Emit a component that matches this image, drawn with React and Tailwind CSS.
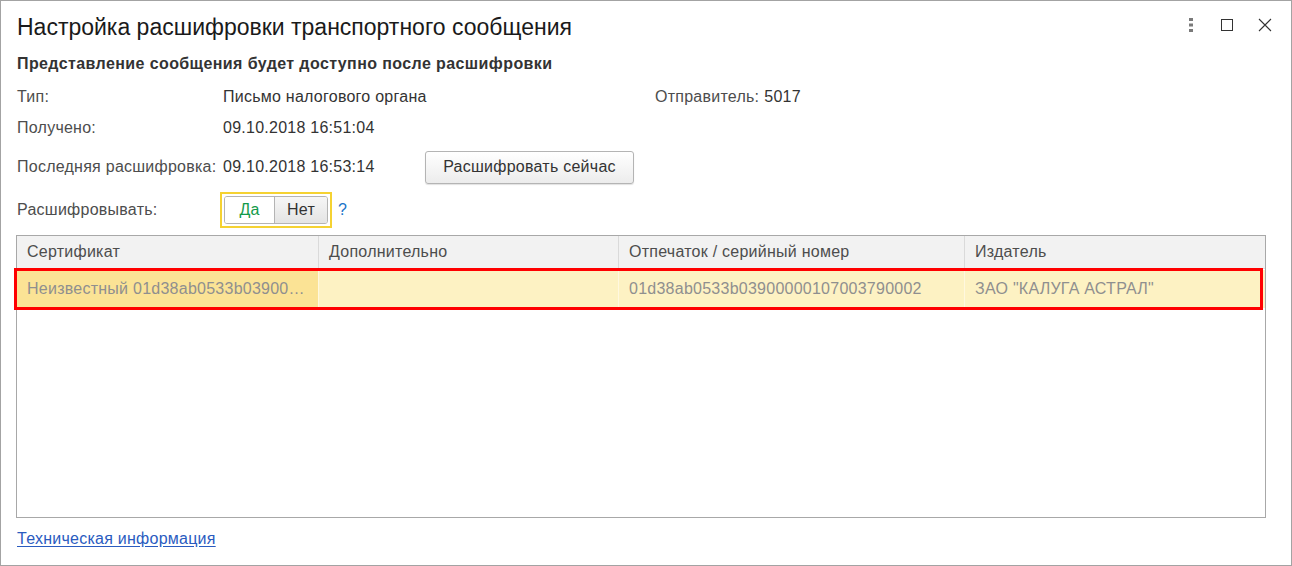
import React from 'react';

const font = { fontFamily: '"Liberation Sans", Arial, sans-serif' };

function TitleIcons() {
  return (
    <div className="flex items-center pr-[19px] pt-[3px]">
      <svg width="6" height="16" viewBox="0 0 6 16">
        <rect x="1" y="1" width="4" height="3" fill="#7a7a7a" />
        <rect x="1" y="6.5" width="4" height="3" fill="#7a7a7a" />
        <rect x="1" y="12" width="4" height="3" fill="#7a7a7a" />
      </svg>
      <svg width="14" height="14" viewBox="0 0 14 14" className="ml-[26px]">
        <rect x="1.5" y="1.5" width="11" height="11" fill="none" stroke="#333" strokeWidth="1" />
      </svg>
      <svg width="14" height="14" viewBox="0 0 14 14" className="ml-[24px]">
        <path d="M1 1 L13 13 M13 1 L1 13" stroke="#333" strokeWidth="1.1" />
      </svg>
    </div>
  );
}

export default function App() {
  const cols = [
    { title: 'Сертификат', w: 'w-[301px]' },
    { title: 'Дополнительно', w: 'w-[300px]' },
    { title: 'Отпечаток / серийный номер', w: 'w-[346px]' },
    { title: 'Издатель', w: 'flex-1' },
  ];

  return (
    <div style={font} className="w-[1292px] h-[566px] bg-white border border-[#a3a3a3] relative overflow-hidden">
      {/* Title */}
      <div className="flex items-start justify-between pt-[13px]">
        <h1 className="pl-[16px] text-[23px] leading-[26px] text-[#1a1a1a]">
          Настройка расшифровки транспортного сообщения
        </h1>
        <TitleIcons />
      </div>

      <div className="pl-[16px] pr-[26px] text-[16px] tracking-[0.25px]">
        <div className="mt-[12px] h-[24px] leading-[24px] font-bold tracking-[0.4px] text-[#333]">
          Представление сообщения будет доступно после расшифровки
        </div>

        <div className="mt-[9px] h-[24px] flex items-center">
          <span className="w-[206px] text-[#4d4d4d]">Тип:</span>
          <span className="w-[432px] text-[#333]">Письмо налогового органа</span>
          <span className="text-[#4d4d4d]">Отправитель:</span>
          <span className="ml-[5px] text-[#333]">5017</span>
        </div>

        <div className="mt-[7px] h-[24px] flex items-center">
          <span className="w-[206px] text-[#4d4d4d]">Получено:</span>
          <span className="text-[#333]">09.10.2018 16:51:04</span>
        </div>

        <div className="mt-[11px] h-[32px] flex items-center">
          <span className="w-[206px] text-[#4d4d4d] whitespace-nowrap">Последняя расшифровка:</span>
          <span className="w-[202px] text-[#333]">09.10.2018 16:53:14</span>
          <button className="h-[33px] w-[209px] rounded-[3px] border border-[#b4b4b4] bg-gradient-to-b from-white to-[#ececec] tracking-[0.25px] text-[#333] shadow-[0_1px_1px_rgba(0,0,0,0.12)]">
            Расшифровать сейчас
          </button>
        </div>

        <div className="mt-[9px] h-[36px] flex items-center">
          <span className="w-[203px] text-[#4d4d4d]">Расшифровывать:</span>
          <div className="h-[36px] w-[112px] border-2 border-[#f5d232] p-[2px]">
            <div className="flex h-full rounded-[3px] border border-[#b4b4b4] overflow-hidden">
              <div className="w-[49px] flex items-center justify-center bg-white text-[#129a4a]">Да</div>
              <div className="flex-1 flex items-center justify-center border-l border-[#b4b4b4] bg-gradient-to-b from-[#f6f6f6] to-[#e4e4e4] text-[#333]">Нет</div>
            </div>
          </div>
          <span className="ml-[6px] text-[#1a73c8]">?</span>
        </div>

        {/* Table */}
        <div className="mt-[7px] -ml-[1px] h-[283px] w-[1250px] border border-[#a8a8a8] relative">
          <div className="flex h-[33px] bg-[#f2f2f2] border-b border-[#e2e2e2] text-[#4d4d4d]">
            {cols.map((c, i) => (
              <div key={c.title} className={`${c.w} flex items-center pl-[10px] ${i > 0 ? 'border-l border-[#dadada]' : ''}`}>
                {c.title}
              </div>
            ))}
          </div>
          <div className="flex h-[38px] mt-[1px] text-[#8f8f8f]">
            <div className="w-[301px] flex items-center pl-[10px] bg-[#fbe395] whitespace-nowrap">
              Неизвестный 01d38ab0533b03900…
            </div>
            <div className="w-[300px] bg-[#fdf2c3] border-l border-[#fff8df]" />
            <div className="w-[346px] flex items-center pl-[10px] bg-[#fdf2c3] border-l border-[#fff8df]">
              01d38ab0533b03900000107003790002
            </div>
            <div className="flex-1 flex items-center pl-[10px] bg-[#fdf2c3] border-l border-[#fff8df]">
              ЗАО "КАЛУГА АСТРАЛ"
            </div>
          </div>
          {/* red highlight */}
          <div className="absolute left-[-3px] top-[32px] w-[1249px] h-[42px] border-[3px] border-[#ff0000] pointer-events-none" />
        </div>

        <a href="#" className="mt-[11px] inline-block leading-[20px] text-[#2a5bbf] underline underline-offset-2">
          Техническая информация
        </a>
      </div>
    </div>
  );
}
